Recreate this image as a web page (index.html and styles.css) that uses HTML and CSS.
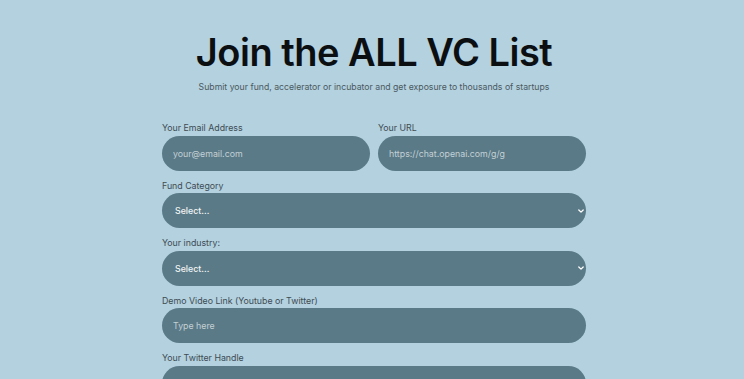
FILE: index.html
```html
<!DOCTYPE html>
<html lang="en">
<head>
  <meta charset="UTF-8" />
  <meta name="viewport" content="width=device-width, initial-scale=1.0"/>
  <title>Join the ALL VC List</title>
  <link rel="stylesheet" href="styles.css">
</head>
<body>
<div class="page">
  <h1 class="title">Join the ALL VC List</h1>
  <p class="subtitle">Submit your fund, accelerator or incubator and get exposure to thousands of startups</p>
  <form class="form">
    <div class="row two">
      <div class="field">
        <label>Your Email Address</label>
        <input type="text" placeholder="your@email.com">
      </div>
      <div class="field">
        <label>Your URL</label>
        <input type="text" placeholder="https://chat.openai.com/g/g">
      </div>
    </div>
    <div class="field">
      <label>Fund Category</label>
      <div class="select">
        <span>Select...</span>
        <svg width="8" height="8" viewBox="0 0 8 8"><path d="M1.8 3 L4 5.1 L6.2 3" fill="none" stroke="#fff" stroke-width="1.3" stroke-linecap="round" stroke-linejoin="round"/></svg>
      </div>
    </div>
    <div class="field">
      <label>Your industry:</label>
      <div class="select">
        <span>Select...</span>
        <svg width="8" height="8" viewBox="0 0 8 8"><path d="M1.8 3 L4 5.1 L6.2 3" fill="none" stroke="#fff" stroke-width="1.3" stroke-linecap="round" stroke-linejoin="round"/></svg>
      </div>
    </div>
    <div class="field">
      <label>Demo Video Link (Youtube or Twitter)</label>
      <input type="text" placeholder="Type here">
    </div>
    <div class="field">
      <label>Your Twitter Handle</label>
      <input type="text" placeholder="@handle">
    </div>
  </form>
</div>
</body>
</html>
```
FILE: styles.css
```css
* { box-sizing: border-box; margin: 0; padding: 0; }
html, body { height: 100%; background: #b3d1df; font-family: Inter, 'Noto Sans', sans-serif; overflow: hidden; }
.page { width: 424px; margin: 0 auto; padding-top: 29px; transform: translateX(2px); }
.title { text-align: center; font-size: 38px; font-weight: 600; letter-spacing: -0.5px; color: #0b0f12; line-height: 46px; }
.subtitle { text-align: center; font-size: 8.7px; color: #4b5960; margin-top: 6px; line-height: 12px; white-space: nowrap; }
.form { margin-top: 28px; display: flex; flex-direction: column; gap: 8px; }
.row.two { display: flex; gap: 8px; }
.row.two .field { flex: 1; }
.field { display: flex; flex-direction: column; }
.field label { font-size: 8.8px; color: #3e4c53; line-height: 13px; margin-bottom: 1.5px; }
.field input, .select { height: 35px; border: none; border-radius: 18px; background: #5a7a87; padding: 0 11px; font-family: inherit; font-size: 8.8px; color: #fff; outline: none; }
.field input::placeholder { color: #c3d0d5; }
.select { display: flex; align-items: center; justify-content: space-between; padding: 0 1px 0 13px; color: #f2f5f6; font-weight: 500; }
```
